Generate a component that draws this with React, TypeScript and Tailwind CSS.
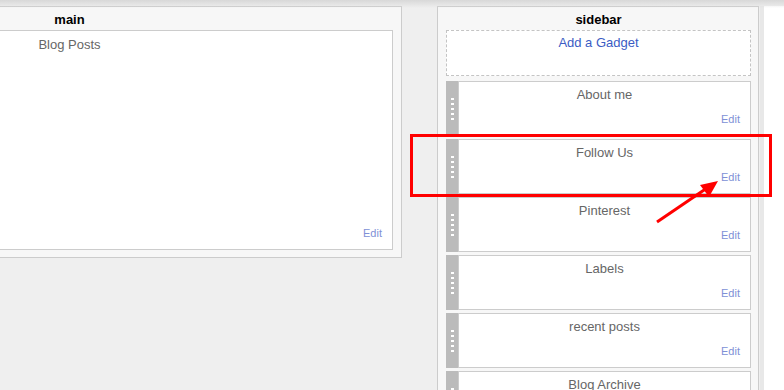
// Blogger layout editor — main column + sidebar gadget list
import React from 'react';

const GADGETS = ['About me', 'Follow Us', 'Pinterest', 'Labels', 'recent posts', 'Blog Archive'];

function Handle() {
  return (
    <div className="w-[12px] shrink-0 bg-[#bbbbbb] flex flex-col items-center justify-center gap-[3px]">
      {[0, 1, 2, 3, 4].map((i) => (
        <div key={i} className="w-[3px] h-[2px] bg-white" />
      ))}
    </div>
  );
}

function Gadget({ title }: { title: string }) {
  return (
    <div className="flex h-[55px] shrink-0">
      <Handle />
      <div className="flex-1 flex flex-col border border-[#cccccc] bg-white">
        <div className="pt-[5px] text-center text-[13px] leading-[16px] text-[#666666]">{title}</div>
        <div className="mt-auto pb-[10px] pr-[10px] text-right text-[11px] leading-[12px] text-[#8090d6]">Edit</div>
      </div>
    </div>
  );
}

export default function App() {
  return (
    <div
      className="relative w-[784px] h-[390px] overflow-hidden bg-[#efefef]"
      style={{ fontFamily: '"Liberation Sans", Arial, sans-serif' }}
    >
      <div className="flex items-start pt-[6px] h-full">
        {/* main column */}
        <div className="ml-[-263px] w-[665px] h-[252px] shrink-0 flex flex-col border border-[#cccccc] bg-[#f7f7f7] px-[8px] pb-[7px]">
          <div className="h-[23px] text-center text-[13px] font-bold leading-[26px] text-black">main</div>
          <div className="flex-1 flex flex-col border border-[#cccccc] bg-white">
            <div className="pt-[6px] text-center text-[13px] leading-[16px] text-[#666666]">Blog Posts</div>
            <div className="mt-auto pb-[10px] pr-[10px] text-right text-[11px] leading-[12px] text-[#8090d6]">Edit</div>
          </div>
        </div>

        {/* sidebar column */}
        <div className="ml-[35px] w-[322px] h-[400px] shrink-0 flex flex-col border border-[#cccccc] bg-[#f7f7f7] pl-[8px] pr-[7px]">
          <div className="h-[23px] text-center text-[13px] font-bold leading-[26px] text-black">sidebar</div>
          <div className="h-[46px] shrink-0 border border-dashed border-[#c4c4c4] bg-white pt-[4px] text-center text-[13px] leading-[16px] text-[#3b5cc4]">
            Add a Gadget
          </div>
          <div className="mt-[5px] flex flex-col gap-[3px]">
            {GADGETS.map((g) => (
              <Gadget key={g} title={g} />
            ))}
          </div>
        </div>

        <div className="w-[4px] h-full bg-[#e8e8e8] ml-[1px]" />
        <div className="flex-1 h-full bg-white" />
      </div>

      {/* top shadow */}
      <div className="absolute left-0 top-0 w-full h-[8px] bg-gradient-to-b from-[#d8d8d8] to-transparent" />

      {/* red annotation box */}
      <div className="absolute left-[410px] top-[134px] w-[362px] h-[63px] border-[3px] border-[#ff0000]" />

      {/* red arrow */}
      <svg className="absolute left-0 top-0" width="784" height="390" viewBox="0 0 784 390">
        <line x1="657" y1="222" x2="707" y2="188" stroke="#ff0000" strokeWidth="3" />
        <polygon points="718,181 700,185 709,197" fill="#ff0000" />
      </svg>
    </div>
  );
}
